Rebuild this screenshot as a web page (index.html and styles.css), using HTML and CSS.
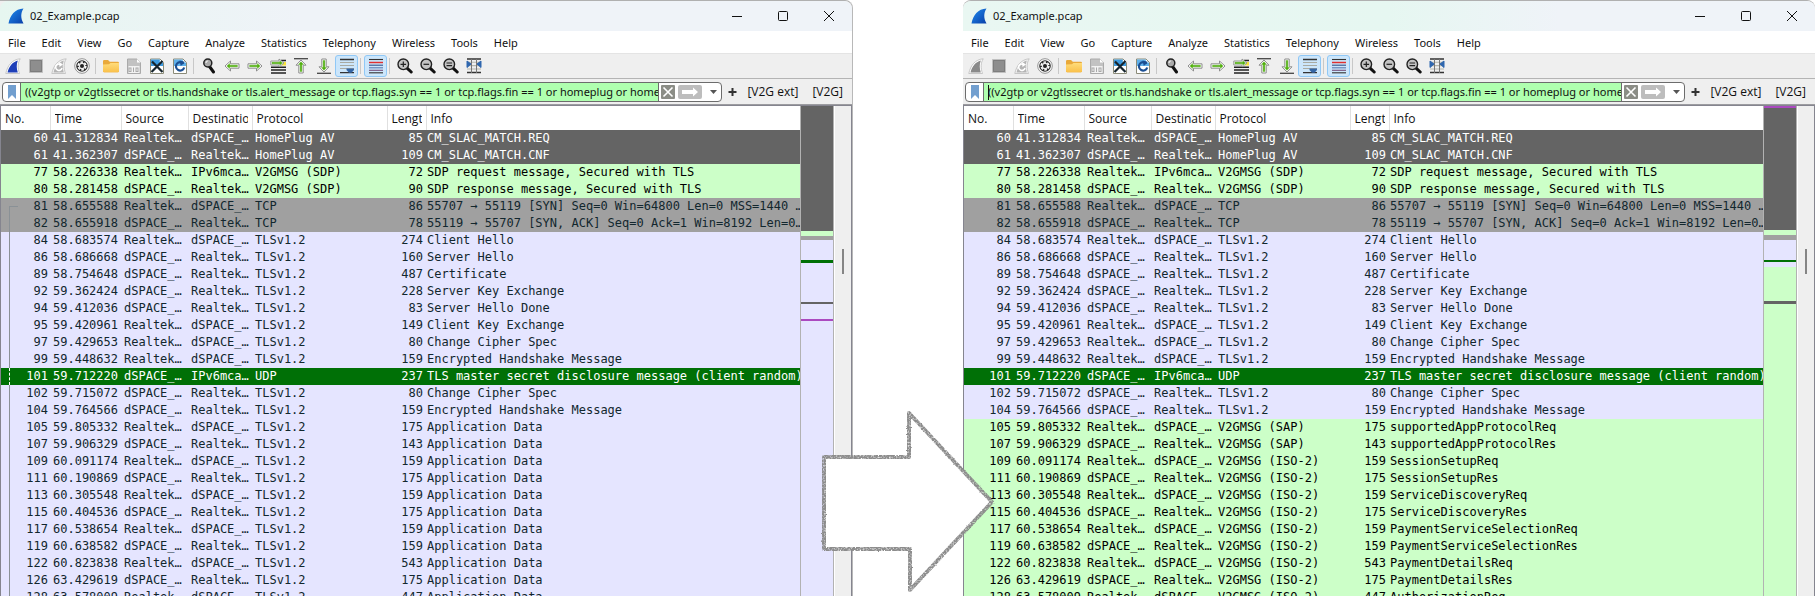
FILE: index.html
```
<!DOCTYPE html>
<html lang="en">
<head>
<meta charset="utf-8">
<title>02_Example.pcap</title>
<link rel="stylesheet" href="styles.css">
</head>
<body>
<svg class="symbols" aria-hidden="true">
  <defs>
    <linearGradient id="gBlue" x1="0" y1="0" x2="1" y2="1"><stop offset="0" stop-color="#1f8df0"/><stop offset="1" stop-color="#0a3fa8"/></linearGradient>
    <linearGradient id="gFolder" x1="0" y1="0" x2="0" y2="1"><stop offset="0" stop-color="#ffdc7a"/><stop offset="1" stop-color="#f9c04a"/></linearGradient>
    <filter id="pencil" x="-5%" y="-5%" width="110%" height="110%">
      <feTurbulence type="fractalNoise" baseFrequency="0.6" numOctaves="2" seed="4" result="n"/>
      <feDisplacementMap in="SourceGraphic" in2="n" scale="2" xChannelSelector="R" yChannelSelector="G" result="d"/>
      <feColorMatrix in="n" type="matrix" values="0 0 0 0 0  0 0 0 0 0  0 0 0 0 0  0 0 -2 0 1.9" result="m"/>
      <feComposite in="d" in2="m" operator="in"/>
    </filter>
  </defs>
  <symbol id="logo" viewBox="0 0 16 16"><path d="M0.5 15.5C2 7 7 1 15.5 .5C12.500 5 12.500 10.500 15.500 15.500Z" fill="url(#gBlue)"/></symbol>
  <symbol id="fin" viewBox="0 0 16 16"><path d="M.8 15.500C2.500 7.500 7 1.500 15.200 .8C12.600 5 12.600 10 14.500 15.500Z" fill="#fff" stroke="#bbb" stroke-width=".8"/><path d="M2.500 14.500C4 8.500 7.500 4 12.800 2.500C11.300 6.500 11.500 10.500 12.800 14.500Z" fill="currentColor"/></symbol>
  <symbol id="stop" viewBox="0 0 16 16"><path d="M1.500 1.500h13v13h-13z" fill="#8e8e8e" stroke="#c0c0c0"/><path d="M2.500 2.500h11v11h-11z" fill="none" stroke="#7d7d7d"/></symbol>
  <symbol id="restart" viewBox="0 0 16 16"><path d="M.8 15.500C2.500 7.500 7 1.500 15.200 .8C12.600 5 12.600 10 14.500 15.500Z" fill="#f4f4f4" stroke="#bbb" stroke-width=".8"/><path d="M2.500 14.500C4 8.500 7.500 4 12.800 2.500C11.300 6.500 11.500 10.500 12.800 14.500Z" fill="#b4b4b4"/><path d="M9.500 6.500A3.200 3.200 0 1 0 11 10" fill="none" stroke="#fff" stroke-width="1.600"/><path d="M8 4l4 2.500-3.500 2.500z" fill="#fff"/></symbol>
  <symbol id="options" viewBox="0 0 16 16"><circle cx="8" cy="8" r="7.300" fill="#fff" stroke="#888" stroke-width=".9"/><circle cx="8" cy="8" r="5.800" fill="#2b2b2b"/><circle cx="8" cy="8" r="3.900" fill="none" stroke="#fff" stroke-width="1.500" stroke-dasharray="2.600 1.480"/><circle cx="8" cy="8" r="3.200" fill="#eee"/><circle cx="8" cy="8" r="2" fill="#222"/></symbol>
  <symbol id="folder" viewBox="0 0 16 16"><path d="M0 3.200Q0 2 1.200 2H5l1.800 1.800H14.800Q16 3.800 16 5V13Q16 14.200 14.800 14.200H1.200Q0 14.200 0 13Z" fill="#e9a93a"/><path d="M0 6.500L6 6.300 7.500 5H16V13Q16 14.200 14.800 14.200H1.200Q0 14.200 0 13Z" fill="url(#gFolder)"/></symbol>
  <symbol id="doc" viewBox="0 0 16 16"><path d="M1.500 1h9.500l3.500 3.500V15.500h-13z" fill="#c2c2c2" stroke="#aaa"/><path d="M2.500 8h11v7h-11z" fill="#f2f2f2"/><path d="M11 1v3.500h3.500z" fill="#fff"/><g fill="none" stroke="#a8a8a8"><rect x="3" y="10" width="2" height="3.500"/><path d="M7.500 9.500v4.500"/><rect x="10" y="10" width="2" height="3.500"/></g></symbol>
  <symbol id="closefile" viewBox="0 0 16 16"><path d="M1.500 1h9.500l3.500 3.500V15.500h-13z" fill="#fff" stroke="#8b8b78"/><path d="M2 1.500h8.800V4.500H14V8H2z" fill="#3d9be0"/><path d="M3 3.500L13.500 14M13.500 3L2.500 14" stroke="#16242c" stroke-width="2.200"/></symbol>
  <symbol id="reload" viewBox="0 0 16 16"><path d="M1.500 1h9.500l3.500 3.500V15.500h-13z" fill="#fff" stroke="#8b8b78"/><path d="M2 1.500h8.800V4.500H14V8H2z" fill="#5fb0ea"/><path d="M11.500 5.800A4.200 4.200 0 1 0 12.200 9.500" fill="none" stroke="#1c4f92" stroke-width="2.200"/><path d="M7.500 2.500L12.800 3.800 8.800 8z" fill="#1c4f92"/></symbol>
  <symbol id="find" viewBox="0 0 16 16"><path d="M8.500 8.500L12.500 14" stroke="#111" stroke-width="3" stroke-linecap="round"/><circle cx="6.800" cy="5" r="4" fill="#aaa" stroke="#222" stroke-width="1.500"/><path d="M5 5a2 2 0 0 1 2-2" stroke="#eee" fill="none" stroke-width="1.200"/></symbol>
  <symbol id="back" viewBox="0 0 16 16"><path d="M1 8L6.500 3V5.800H15V10.200H6.500V13Z" fill="#fff" stroke="#8d8d8d" stroke-width="1" stroke-linejoin="round"/><path d="M3 8L5.600 5.600V7.200H13.400V8.800H5.600V10.400Z" fill="#4fae0c" stroke="#4fae0c" stroke-width=".4"/></symbol>
  <symbol id="goto" viewBox="0 0 16 16"><path d="M11 2.500h5M1 9.200h15M1 12h15M1 15h15" stroke="#222" stroke-width="1.400"/><path d="M12 4h4v3.500h-4z" fill="#f7e23c"/><path d="M14 5L9 1V3H.8V7H9V9Z" fill="#fff" stroke="#8d8d8d" stroke-width=".9"/><path d="M12.500 5L9.800 3V4.200H2V5.800H9.800V7Z" fill="#4fae0c" stroke="#4fae0c" stroke-width=".4"/></symbol>
  <symbol id="first" viewBox="0 0 16 16"><path d="M1 .7h14" stroke="#444" stroke-width="1.300"/><path d="M8 2L13 7.200H10.200V15H5.800V7.200H3Z" fill="#fff" stroke="#8d8d8d" stroke-width="1" stroke-linejoin="round"/><path d="M8 3.800L10.400 6.400H8.800V13.600H7.200V6.400H5.600Z" fill="#4fae0c" stroke="#4fae0c" stroke-width=".4"/></symbol>
  <symbol id="autoscroll" viewBox="0 0 16 16"><path d="M1 1.500h14M1 14.700h14" stroke="#333" stroke-width="1.300"/><path d="M1 4.500h14M1 7.500h14M1 10.500h14" stroke="#a9aaa2" stroke-width="1.200"/><path d="M7.500 10.500h7.500v1.500l-2.500 2.800h-2.500l-2.500-2.800z" fill="#3465a4"/></symbol>
  <symbol id="colorize" viewBox="0 0 16 16"><g stroke-width="1.100"><path d="M1 1.500h14" stroke="#333"/><path d="M1 4.500h14" stroke="#e03030" stroke-width="1.500"/><path d="M1 7.200h14" stroke="#34558b"/><path d="M1 9.800h14" stroke="#5a7ab0"/><path d="M1 12.300h14" stroke="#75507b"/><path d="M1 14.800h14" stroke="#333"/></g></symbol>
  <symbol id="lens" viewBox="0 0 16 16"><path d="M9.800 9.800L14.200 14" stroke="#111" stroke-width="3" stroke-linecap="round"/><circle cx="6.300" cy="6.300" r="5.300" fill="#c4c4c4" stroke="#222" stroke-width="1.400"/></symbol>
  <symbol id="columns" viewBox="0 0 16 16"><path d="M1 1h14M1 14.500h14" stroke="#333" stroke-width="1.300"/><path d="M1 4.300h14M1 7.600h14M1 11h14" stroke="#b5b6ac" stroke-width="1.100"/><path d="M5.500 1v14M10.500 1v14" stroke="#777" stroke-width="1"/><path d="M1 3l4 3-4 3.500zM15 3l-4 3 4 3.500z" fill="#2f66ae" stroke="#2f66ae"/></symbol>
</svg>

<main class="compare">
  <section class="window window-left" aria-label="Encrypted capture">
    <header class="titlebar"><svg class="logo"><use href="#logo"/></svg><h1>02_Example.pcap</h1></header>
    <div class="tools"></div>
    <div class="capture">
      <table class="packets" data-mode="encrypted"></table>
      <div class="minimap"><i class="dark s125"></i><i class="green s5"></i><i class="gray s4"></i><i class="tls s20"></i><i class="secret s3"></i><i class="tls s39"></i><i class="dark s2"></i><i class="tls s15"></i><i class="mark s2"></i><i class="tls rest"></i></div>
      <div class="scroll"><i></i></div>
    </div>
  </section>
  <section class="window window-right" aria-label="Decrypted capture">
    <header class="titlebar"><svg class="logo"><use href="#logo"/></svg><h1>02_Example.pcap</h1></header>
    <div class="tools"></div>
    <div class="capture">
      <table class="packets" data-mode="decrypted"></table>
      <div class="minimap"><i class="mark s2"></i><i class="dark s122"></i><i class="green s5"></i><i class="gray s5"></i><i class="tls s20"></i><i class="secret s2"></i><i class="tls s5"></i><i class="green s34"></i><i class="dark s3"></i><i class="green rest"></i></div>
      <div class="scroll"><i></i></div>
    </div>
  </section>
  <svg class="arrow" viewBox="0 0 180 188" aria-hidden="true">
    <path d="M6 50H91V6L174 95 92 182V142H6Z" fill="#fff"/>
    <path d="M6 50H91V6L174 95 92 183V142H6Z" fill="none" stroke="#8c8c8c" stroke-width="4" stroke-linejoin="round" filter="url(#pencil)"/>
  </svg>
</main>
<script src="app.js"></script>
</body>
</html>
```
FILE: styles.css
```
* { box-sizing: border-box; }

body {
  margin: 0;
  background: #fff;
  color: #111;
  font: 12px/16px "Open Sans", "Noto Sans", sans-serif;
}

.symbols { position: absolute; width: 0; height: 0; }

button, input { font: inherit; color: inherit; border: 0; background: none; padding: 0; margin: 0; }

.compare {
  position: relative;
  display: grid;
  grid-template-columns: 853fr 852fr;
  column-gap: 110px;
  height: 100vh;
  overflow: hidden;
}

.window {
  display: flex;
  flex-direction: column;
  min-width: 0;
  min-height: 0;
  background: #efefef;
  border-top: 1px solid #b0b0b0;
  border-top-right-radius: 8px;
  border-right: 1px solid #b8b8b8;
}
.window-right { border-top-left-radius: 8px; border-right: 0; }

.titlebar {
  display: flex;
  align-items: center;
  height: 30px;
  padding-left: 8px;
  background: linear-gradient(90deg, #e6f6f0, #eff3f8 35%);
  border-radius: 8px 8px 0 0;
}
.window-right .titlebar { background: linear-gradient(90deg, #e9f7f2, #e6f7f1 50%, #eff3f8 70%); }
.titlebar h1 { margin: 0 0 0 6px; flex: 1; font: 11px/16px "Noto Sans", sans-serif; }
.logo { width: 16px; height: 16px; }
.caption { width: 46px; height: 28px; display: grid; place-items: center; }
.caption svg { width: 12px; height: 12px; fill: none; stroke: #111; }

.menu {
  display: flex;
  align-items: center;
  gap: 16px;
  height: 22px;
  padding: 2px 8px 0;
  background: #fff;
  font: 11px/16px "Noto Sans", sans-serif;
}

.toolbar {
  display: flex;
  align-items: center;
  height: 26px;
  padding-left: 1px;
  border-top: 1px solid #e4e4e4;
  border-bottom: 1px solid #b4b4b4;
}
.tool { width: 23px; height: 22px; display: grid; place-items: center; border-radius: 3px; }
.tool svg { width: 16px; height: 16px; }
.tool.on { background: #cce6fb; border: 1px solid #90c8f6; }
.sep { width: 1px; height: 16px; margin: 0 3px 0 2px; background: #c8c8c8; }
.flip { transform: rotate(180deg); }
.fin-blue { color: #1e3fb8; }
.fin-gray { color: #8a8a8a; }

.filterbar {
  display: flex;
  align-items: center;
  height: 26px;
  padding: 0 9px 0 2px;
  border-bottom: 1px solid #9c9ca0;
}
.field {
  position: relative;
  display: flex;
  flex: 1;
  min-width: 0;
  align-items: stretch;
  height: 20px;
  background: #fff;
  border: 1px solid #6c6c6c;
  border-radius: 4px;
  overflow: hidden;
}
.bookmark { width: 18px; display: grid; place-items: center; border-right: 1px solid #6c6c6c; }
.bookmark svg { width: 8px; height: 14px; }
.field input { flex: 1; min-width: 0; padding: 0 0 0 4px; background: #afffaf; outline: 0; font: 11px/16px "Noto Sans", sans-serif; }
.field-actions { display: flex; align-items: center; gap: 3px; width: 63px; padding-left: 2px; border-left: 1px solid #6c6c6c; }
.field-actions button { display: grid; }
.field-actions .drop { margin-left: 5px; }
.caret { position: absolute; left: 22px; top: 2px; width: 1px; height: 15px; background: #111; }
.window-left .caret { display: none; }
.add { width: 11px; height: 18px; margin: 0 9px 0 5px; }
.add svg { display: block; width: 11px; height: 18px; }
.links { display: flex; gap: 14px; }

.capture { display: flex; flex: 1; min-height: 0; overflow: hidden; border: solid #85858f; border-width: 1px 1px 0; align-items: stretch; }
.packets {
  display: block;
  flex: 1;
  min-width: 0;
  background: #fff;
  overflow: hidden;
}
.packets thead, .packets tbody { display: table; table-layout: fixed; width: 100%; border-collapse: collapse; }
.packets th, .packets td { padding: 0 3px; text-align: left; white-space: nowrap; overflow: hidden; }
.packets th { height: 24px; padding: 2px 4px 0; font-weight: 400; border-right: 1px solid #e0e0e0; }
.packets th span { display: block; overflow: hidden; }
.packets th:last-child { border-right: 0; }
.packets td { height: 17px; font: 12px/17px "DejaVu Sans Mono", monospace; }
.packets td.c-info { padding: 0 0 0 1px; }
.packets td.c-no { padding-right: 2px; }
.c-no { width: 49px; }
.c-time { width: 71px; }
.c-src { width: 67px; }
.c-dst { width: 64px; }
.c-proto { width: 135px; }
.c-len { width: 39px; }
.packets td.c-no, .packets td.c-len { text-align: right; }

.dark { background: #646464; color: #fff; }
.green { background: #ccffc8; color: #000; }
.gray { background: #a0a0a0; color: #12272e; }
.tls { background: #e5e5ff; color: #12272e; }
.secret { background: #007006; color: #fff; }
.mark { background: #ab4ac0; }

.window-left td.c-no { position: relative; }
.thread::before { content: ""; position: absolute; left: 8px; top: 0; bottom: 0; border-left: 1px solid #8a9196; }
.thread-start::before { top: 8px; width: 8px; border-top: 1px solid #8a9196; }
.secret .thread::before { border-left: 1px dashed #fff; }

.minimap { display: flex; flex-direction: column; width: 34px; border: solid #b2b2b2; border-width: 0 1px; }
.minimap i { flex: none; }
.minimap .rest { flex: 1; }
.s2 { height: 2px; } .s3 { height: 3px; } .s4 { height: 4px; } .s5 { height: 5px; }
.s15 { height: 15px; } .s20 { height: 20px; } .s34 { height: 34px; } .s39 { height: 39px; }
.s122 { height: 122px; } .s125 { height: 125px; }

.scroll { width: 17px; padding: 143px 0 0 7px; border-left: 1px solid #fff; }
.scroll i { display: block; width: 2px; height: 25px; background: #858585; }

.arrow { position: absolute; top: 407px; left: calc(50% - 90px); width: 180px; height: 188px; }
```
FILE: app.js
```
const captionButtons = `
  <button class="caption" aria-label="Minimize"><svg viewBox="0 0 12 12"><path d="M1 6.500h10"/></svg></button>
  <button class="caption" aria-label="Maximize"><svg viewBox="0 0 12 12"><rect x="1.500" y="1.500" width="9" height="9" rx="1"/></svg></button>
  <button class="caption" aria-label="Close"><svg viewBox="0 0 12 12"><path d="M1 1l10 10M11 1L1 11"/></svg></button>`;

const menus = ["File", "Edit", "View", "Go", "Capture", "Analyze", "Statistics", "Telephony", "Wireless", "Tools", "Help"];

const filterText = "((v2gtp or v2gtlssecret or tls.handshake or tls.alert_message or tcp.flags.syn == 1 or tcp.flags.fin == 1 or homeplug or homeplug-av))";

const use = (id, cls = "") => `<svg viewBox="0 0 16 16" class="${cls}"><use href="#${id}"/></svg>`;
const lens = (mark) => `<svg viewBox="0 0 16 16"><use href="#lens"/><path d="${mark}" stroke="#222" stroke-width="1.200"/></svg>`;
const tool = (label, svg, cls = "") => `<button class="tool ${cls}" aria-label="${label}">${svg}</button>`;
const sep = `<span class="sep"></span>`;

const toolbar = (fin) => [
  tool("Start capture", use("fin"), fin), tool("Stop capture", use("stop")), tool("Restart capture", use("restart")),
  tool("Capture options", use("options")), sep,
  tool("Open", use("folder")), tool("Save", use("doc")), tool("Close file", use("closefile")), tool("Reload", use("reload")), sep,
  tool("Find packet", use("find")), tool("Previous", use("back")), tool("Next", use("back", "flip")), tool("Go to packet", use("goto")),
  tool("First packet", use("first")), tool("Last packet", use("first", "flip")), tool("Auto scroll", use("autoscroll"), "on"), sep,
  tool("Colorize", use("colorize"), "on"), sep,
  tool("Zoom in", lens("M3.500 6.300h5.600M6.300 3.500v5.600")), tool("Zoom out", lens("M3.500 6.300h5.600")),
  tool("Normal size", lens("M3.500 5h5.600M3.500 7.600h5.600")), tool("Resize columns", use("columns")),
].join("");

const filterbar = `
  <div class="field">
    <button class="bookmark" aria-label="Filter bookmarks"><svg viewBox="0 0 8 14"><path d="M0 0h8v14l-4-4-4 4z" fill="#729fcf"/></svg></button>
    <input type="text" aria-label="Display filter" value="${filterText}">
    <span class="caret"></span>
    <div class="field-actions">
      <button aria-label="Clear filter"><svg width="14" height="14" viewBox="0 0 14 14"><rect width="14" height="14" rx="1" fill="#8b8d86"/><path d="M2.500 2.500l9 9M11.500 2.500l-9 9" stroke="#fff" stroke-width="1.600"/></svg></button>
      <button aria-label="Apply filter"><svg width="24" height="14" viewBox="0 0 24 14"><rect width="24" height="14" rx="2" fill="#bdbdbd"/><path d="M4 5h11V2.500L20 7l-5 4.500V9H4z" fill="#fff"/></svg></button>
      <button class="drop" aria-label="Recent filters"><svg width="7" height="4" viewBox="0 0 7 4"><path d="M0 0h7L3.500 4z" fill="#555"/></svg></button>
    </div>
  </div>
  <button class="add" aria-label="Add filter button"><svg viewBox="0 0 11 18"><path d="M1.500 9h8M5.500 5v8" stroke="#333" stroke-width="2"/></svg></button>
  <div class="links"><button>[V2G ext]</button><button>[V2G]</button></div>`;

const R = "Realtek…", D = "dSPACE_…", M = "IPv6mca…", T = "TLSv1.2", APP = "Application Data";
const iso = "V2GMSG (ISO-2)", sap = "V2GMSG (SAP)";

const rows = [
  ["dark", 60, "41.312834", R, D, "HomePlug AV", 85, "CM_SLAC_MATCH.REQ"],
  ["dark", 61, "41.362307", D, R, "HomePlug AV", 109, "CM_SLAC_MATCH.CNF"],
  ["green", 77, "58.226338", R, M, "V2GMSG (SDP)", 72, "SDP request message, Secured with TLS"],
  ["green", 80, "58.281458", D, R, "V2GMSG (SDP)", 90, "SDP response message, Secured with TLS"],
  ["gray", 81, "58.655588", R, D, "TCP", 86, "55707 → 55119 [SYN] Seq=0 Win=64800 Len=0 MSS=1440 …"],
  ["gray", 82, "58.655918", D, R, "TCP", 78, "55119 → 55707 [SYN, ACK] Seq=0 Ack=1 Win=8192 Len=0…"],
  ["tls", 84, "58.683574", R, D, T, 274, "Client Hello"],
  ["tls", 86, "58.686668", D, R, T, 160, "Server Hello"],
  ["tls", 89, "58.754648", D, R, T, 487, "Certificate"],
  ["tls", 92, "59.362424", D, R, T, 228, "Server Key Exchange"],
  ["tls", 94, "59.412036", D, R, T, 83, "Server Hello Done"],
  ["tls", 95, "59.420961", R, D, T, 149, "Client Key Exchange"],
  ["tls", 97, "59.429653", R, D, T, 80, "Change Cipher Spec"],
  ["tls", 99, "59.448632", R, D, T, 159, "Encrypted Handshake Message"],
  ["secret", 101, "59.712220", D, M, "UDP", 237, "TLS master secret disclosure message (client random)"],
  ["tls", 102, "59.715072", D, R, T, 80, "Change Cipher Spec"],
  ["tls", 104, "59.764566", D, R, T, 159, "Encrypted Handshake Message"],
  ["app", 105, "59.805332", R, D, sap, 175, "supportedAppProtocolReq"],
  ["app", 107, "59.906329", D, R, sap, 143, "supportedAppProtocolRes"],
  ["app", 109, "60.091174", R, D, iso, 159, "SessionSetupReq"],
  ["app", 111, "60.190869", D, R, iso, 175, "SessionSetupRes"],
  ["app", 113, "60.305548", R, D, iso, 159, "ServiceDiscoveryReq"],
  ["app", 115, "60.404536", D, R, iso, 175, "ServiceDiscoveryRes"],
  ["app", 117, "60.538654", R, D, iso, 159, "PaymentServiceSelectionReq"],
  ["app", 119, "60.638582", D, R, iso, 159, "PaymentServiceSelectionRes"],
  ["app", 122, "60.823838", R, D, iso, 543, "PaymentDetailsReq"],
  ["app", 126, "63.429619", D, R, iso, 175, "PaymentDetailsRes"],
  ["app", 128, "63.578009", R, D, iso, 447, "AuthorizationReq"],
];

const keys = ["c-no", "c-time", "c-src", "c-dst", "c-proto", "c-len", "c-info"];
const heads = ["No.", "Time", "Source", "Destination", "Protocol", "Length", "Info"];

function renderTable(table) {
  const encrypted = table.dataset.mode === "encrypted";
  const body = rows.map(([kind, ...cells]) => {
    let cls = kind;
    if (kind === "app") {
      cls = encrypted ? "tls" : "green";
      if (encrypted) { cells[4] = T; cells[6] = APP; }
    }
    const thread = encrypted && cells[0] >= 81 ? (cells[0] === 81 ? " thread thread-start" : " thread") : "";
    return `<tr class="${cls}">${cells.map((c, i) => `<td class="${keys[i]}${i ? "" : thread}">${c}</td>`).join("")}</tr>`;
  }).join("");
  table.innerHTML = `<thead><tr>${heads.map((h, i) => `<th class="${keys[i]}"><span>${h}</span></th>`).join("")}</tr></thead><tbody>${body}</tbody>`;
}

document.querySelectorAll(".titlebar").forEach((bar) => bar.insertAdjacentHTML("beforeend", captionButtons));
document.querySelectorAll(".tools").forEach((el, i) => {
  el.innerHTML = `<nav class="menu">${menus.map((m) => `<button>${m}</button>`).join("")}</nav>
    <div class="toolbar">${toolbar(i ? "fin-gray" : "fin-blue")}</div>
    <div class="filterbar">${filterbar}</div>`;
});
document.querySelectorAll(".packets").forEach(renderTable);
```
